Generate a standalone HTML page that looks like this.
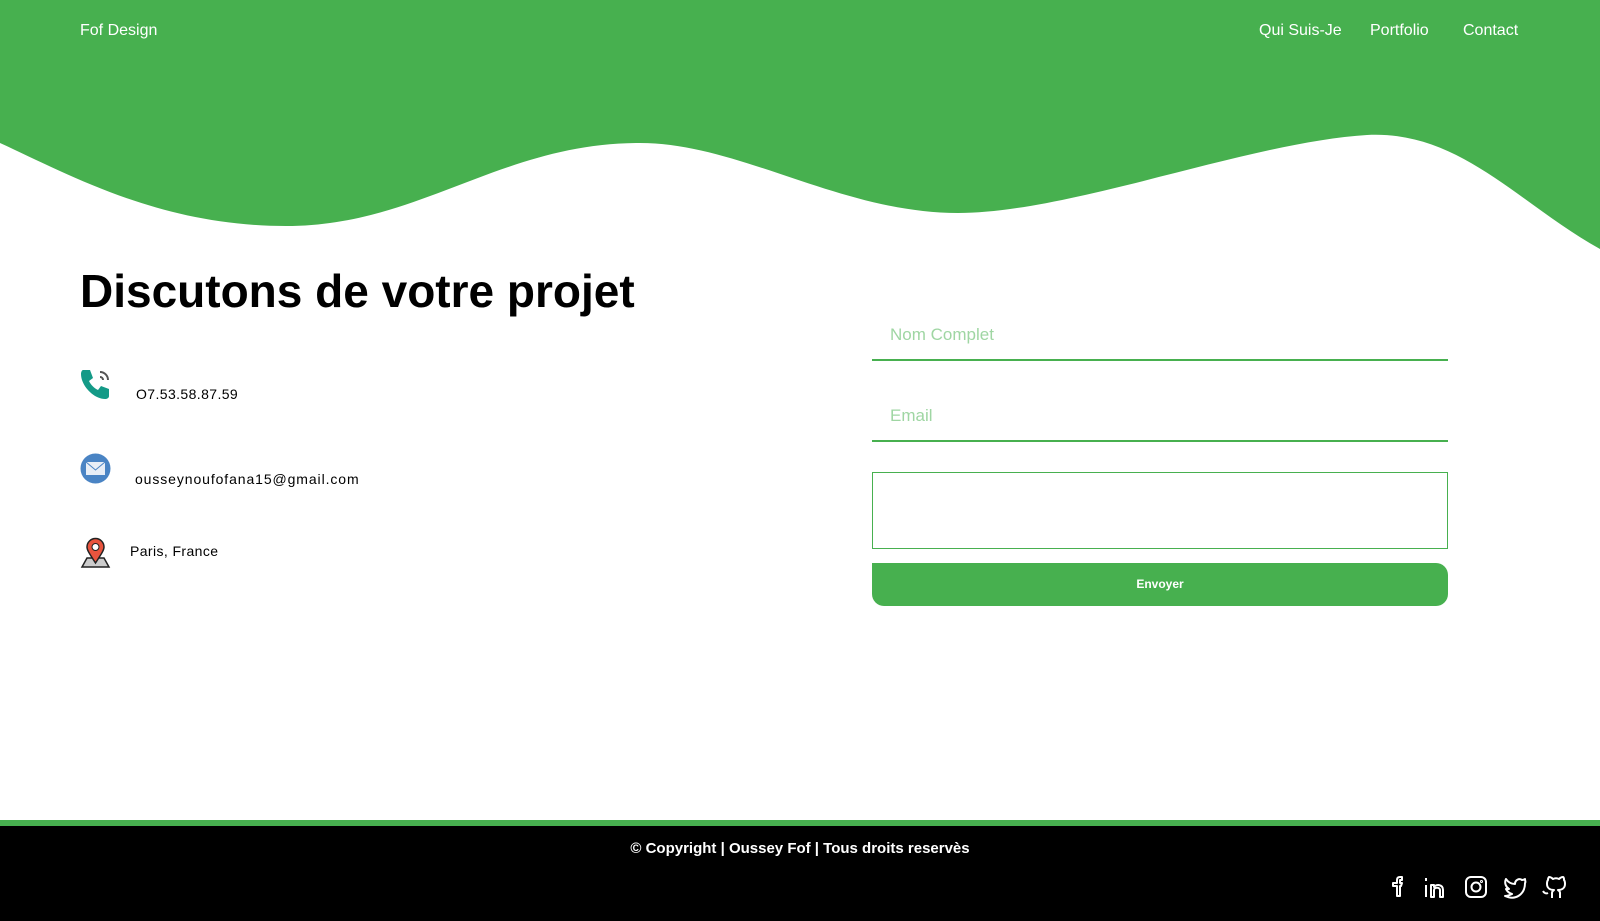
<!DOCTYPE html>
<html><head><meta charset="utf-8"><style>
*{margin:0;padding:0;box-sizing:border-box}
body{width:1600px;height:921px;position:relative;background:#fff;font-family:"Liberation Sans",sans-serif;overflow:hidden}
.abs{position:absolute}
.nav{color:#fff;font-size:16px;top:22px}
h1{position:absolute;left:80px;top:264px;font-size:46px;font-weight:bold;color:#000}
.t{position:absolute;font-size:14px;color:#000;letter-spacing:0.4px}
.inp{position:absolute;left:872px;width:576px;border-bottom:2px solid #47b04f;color:#9fd6a3;font-size:17px;padding-left:18px}
</style></head><body>
<svg class="abs" style="left:0;top:0" width="1600" height="260" viewBox="0 0 1600 260">
<path d="M0 0H1600V249C1520 205 1460 130 1367 135C1250 142 1070 213 958 213C840 213 740 143 640 143C500 143 420 226 286 226C160 226 70 175 0 143Z" fill="#47b04f"/>
</svg>
<div class="abs nav" style="left:80px">Fof Design</div>
<div class="abs nav" style="left:1259px">Qui Suis-Je</div>
<div class="abs nav" style="left:1370px">Portfolio</div>
<div class="abs nav" style="left:1463px">Contact</div>
<h1>Discutons de votre projet</h1>
<svg class="abs" style="left:80px;top:368px" width="32" height="32" viewBox="0 0 32 32">
<path d="M3 2h7l3 8-4 3c2 4 5 7 9 9l3-4 8 3v7c0 2-2 3-4 3C14 31 1 18 1 6c0-2 1-4 2-4z" fill="#149a87"/>
<path d="M20 4a8 8 0 0 1 8 8M20 9a3 3 0 0 1 3 3" stroke="#555" stroke-width="2" fill="none"/>
</svg>
<div class="t" style="left:136px;top:386px">O7.53.58.87.59</div>
<svg class="abs" style="left:80px;top:453px" width="31" height="31" viewBox="0 0 31 31">
<circle cx="15.5" cy="15.5" r="15" fill="#4a84c4"/>
<rect x="6" y="9" width="19" height="13" fill="#e8eef6"/>
<path d="M6 9l9.5 8 9.5-8" stroke="#4a84c4" fill="none"/>
</svg>
<div class="t" style="left:135px;top:471px;letter-spacing:0.9px">ousseynoufofana15@gmail.com</div>
<svg class="abs" style="left:80px;top:537px" width="31" height="31" viewBox="0 0 31 31">
<path d="M2 30l5-9h17l5 9z" fill="#ccc" stroke="#222" stroke-width="1.5"/>
<path d="M15.5 26C9 16 7 13 7 10a8.5 8.5 0 0 1 17 0c0 3-2 6-8.5 16z" fill="#e9543e" stroke="#222" stroke-width="1.5"/>
<circle cx="15.5" cy="10" r="3.5" fill="#fff" stroke="#222"/>
</svg>
<div class="t" style="left:130px;top:543px">Paris, France</div>
<div class="inp" style="top:325px;height:36px">Nom Complet</div>
<div class="inp" style="top:406px;height:36px">Email</div>
<div class="abs" style="left:872px;top:472px;width:576px;height:77px;border:1px solid #47b04f"></div>
<div class="abs" style="left:872px;top:563px;width:576px;height:43px;background:#47b04f;border-radius:0 12px 12px 12px;color:#fff;font-size:12px;font-weight:bold;text-align:center;line-height:43px">Envoyer</div>
<div class="abs" style="left:0;top:820px;width:1600px;height:101px;background:#000;border-top:6px solid #47b04f"></div>
<div class="abs" style="left:0;width:1600px;top:840px;text-align:center;color:#fff;font-size:15px;font-weight:bold">© Copyright | Oussey Fof | Tous droits reservès</div>
<svg class="abs" style="left:1380px;top:874px" width="200" height="26" viewBox="0 0 200 26" fill="none" stroke="#fff" stroke-width="2" stroke-linejoin="round">
<path d="M17 22V12h-4v-3h4V6c0-2 1-3 3-3h2v3h-2v3h2l-1 3h-1v10z"/>
<path d="M46 11v12M46 4v3M51 23V11h3v2c2-3 9-3 9 3v7h-3v-7c0-3-6-3-6 0v7z"/>
<rect x="86" y="3" width="20" height="20" rx="5"/><circle cx="96" cy="13" r="4.5"/><circle cx="101.5" cy="7.5" r=".5"/>
<path d="M145 5c-1 1-2 1-3 1-3-2-7 0-7 4-4 0-7-2-9-5-2 4 0 8 3 10-2 0-3 0-3 0 1 2 3 4 6 5-2 1-4 2-7 2 11 5 20-2 20-13 1-1 0-2 0-4z"/>
<path d="M180 24v-5c0-2-1-2-2-3 4 0 7-2 7-6 0-2 0-3-1-4 0-1 0-3-1-3s-3 1-4 2c-2-1-4-1-6 0-1-1-3-2-4-2-1 1-1 2-1 3-1 1-1 2-1 4 0 4 3 6 7 6-1 1-2 1-2 3v5M168 19c-2 1-4 0-5-2"/>
</svg>
</body></html>
